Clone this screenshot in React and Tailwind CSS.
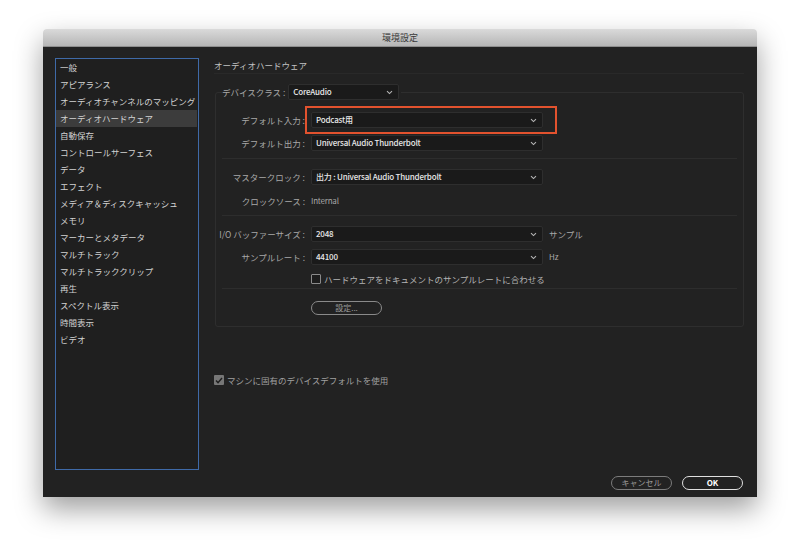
import { useState } from "react";

const sections = [
  "一般",
  "アピアランス",
  "オーディオチャンネルのマッピング",
  "オーディオハードウェア",
  "自動保存",
  "コントロールサーフェス",
  "データ",
  "エフェクト",
  "メディア＆ディスクキャッシュ",
  "メモリ",
  "マーカーとメタデータ",
  "マルチトラック",
  "マルチトラッククリップ",
  "再生",
  "スペクトル表示",
  "時間表示",
  "ビデオ",
];

const font = { fontFamily: '"Noto Sans CJK JP", "Noto Sans", sans-serif' };

function Chevron() {
  return (
    <svg width="7" height="5" viewBox="0 0 7 5" className="shrink-0">
      <path d="M1 1.2l2.5 2.4L6 1.2" fill="none" stroke="#b5b5b5" strokeWidth="1.1" />
    </svg>
  );
}

// Dark dropdown used through the panel
function Select({ value, className = "" }) {
  return (
    <div
      className={`flex h-[16px] items-center justify-between rounded-[2px] border border-[#2e2e2e] bg-[#1a1a1a] pl-[4px] pr-[5px] ${className}`}
    >
      <span className="whitespace-nowrap text-[8px] font-medium tracking-[-0.2px] text-[#e8e8e8]">{value}</span>
      <Chevron />
    </div>
  );
}

function Row({ label, children, className = "" }) {
  return (
    <div className={`flex h-[16px] items-center ${className}`}>
      <div className="w-[95px] shrink-0 whitespace-nowrap pr-[6px] text-right text-[8.5px] text-[#a8a8a8]">
        {label}
      </div>
      {children}
    </div>
  );
}

function Divider({ className = "" }) {
  return <div className={`mx-[6px] h-px bg-[#2d2d2d] ${className}`} />;
}

export default function App() {
  const [active, setActive] = useState(3);

  return (
    <div className="h-[556px] w-[800px] overflow-hidden bg-white pl-[43px] pt-[29px]" style={font}>
      <div className="flex h-[468px] w-[714px] flex-col rounded-t-[4px] shadow-[0_12px_28px_rgba(0,0,0,0.38)]">
        {/* title bar */}
        <div className="flex h-[18px] items-center justify-center rounded-t-[4px] border-b border-[#8e8e8e] bg-gradient-to-b from-[#dadada] to-[#b6b6b6]">
          <span className="text-[9px] text-[#3a3a3a]">環境設定</span>
        </div>

        <div className="flex flex-1 bg-[#222222] pl-[12px] pt-[11px]">
          {/* sections list */}
          <div className="h-[412px] w-[144px] border border-[#3f6aa8] bg-[#1f1f1f] pr-[1px]">
            {sections.map((s, i) => (
              <div
                key={s}
                onClick={() => setActive(i)}
                className={`flex h-[17px] cursor-default items-center whitespace-nowrap pl-[4px] text-[8.5px] text-[#d2d2d2] ${
                  active === i ? "bg-[#3c3c3c]" : ""
                }`}
              >
                {s}
              </div>
            ))}
          </div>

          {/* right panel */}
          <div className="ml-[15px] flex w-[530px] flex-col">
            <div className="flex h-[16px] items-center border-b border-[#292929] text-[8.5px] text-[#c2c2c2]">
              オーディオハードウェア
            </div>

            <div className="ml-[1px] mt-[18px] flex flex-col rounded-[3px] border border-[#2e2e2e]">
              {/* legend */}
              <div className="-mt-[9px] ml-[6px] flex w-fit items-center bg-[#222222] pr-[2px]">
                <span className="pr-[3px] text-[8.5px] text-[#a8a8a8]">デバイスクラス :</span>
                <Select value="CoreAudio" className="w-[111px]" />
              </div>

              <Row label="デフォルト入力 :" className="mt-[12px]">
                <div className="relative">
                  <Select value="Podcast用" className="w-[232px]" />
                  <div className="pointer-events-none absolute -bottom-[6px] -left-[6px] -right-[14px] -top-[6px] border-2 border-[#e2522e]" />
                </div>
              </Row>
              <Row label="デフォルト出力 :" className="mt-[7px]">
                <Select value="Universal Audio Thunderbolt" className="w-[232px]" />
              </Row>

              <Divider className="mt-[7px]" />

              <Row label="マスタークロック :" className="mt-[10px]">
                <Select value="出力 : Universal Audio Thunderbolt" className="w-[232px]" />
              </Row>
              <Row label="クロックソース :" className="mt-[8px]">
                <span className="text-[8px] tracking-[-0.2px] text-[#a8a8a8]">Internal</span>
              </Row>

              <Divider className="mt-[6px]" />

              <Row label="I/O バッファーサイズ :" className="mt-[10px]">
                <Select value="2048" className="w-[232px]" />
                <span className="ml-[6px] text-[8.5px] text-[#a8a8a8]">サンプル</span>
              </Row>
              <Row label="サンプルレート :" className="mt-[7px]">
                <Select value="44100" className="w-[232px]" />
                <span className="ml-[6px] text-[8px] text-[#a8a8a8]">Hz</span>
              </Row>
              <Row label="" className="mt-[6px]">
                <div className="flex items-center">
                  <div className="h-[10px] w-[10px] rounded-[1px] border border-[#8a8a8a] bg-[#1c1c1c]" />
                  <span className="ml-[3px] text-[8.5px] text-[#b4b4b4]">
                    ハードウェアをドキュメントのサンプルレートに合わせる
                  </span>
                </div>
              </Row>

              <Divider className="mt-px" />

              <div className="mb-[11px] mt-[12px] pl-[95px]">
                <button className="flex h-[14px] w-[71px] items-center justify-center rounded-full border border-[#8a8a8a] text-[8px] text-[#9c9c9c]">
                  設定...
                </button>
              </div>
            </div>

            <div className="mt-[47px] flex items-center">
              <div className="flex h-[10px] w-[10px] items-center justify-center rounded-[1px] bg-[#777777]">
                <svg width="8" height="7" viewBox="0 0 8 7">
                  <path d="M1 3.6l2 2L7 1" fill="none" stroke="#1e1e1e" strokeWidth="1.4" />
                </svg>
              </div>
              <span className="ml-[3px] text-[8.5px] text-[#a0a0a0]">
                マシンに固有のデバイスデフォルトを使用
              </span>
            </div>

            <div className="mt-auto mb-[7px] flex justify-end gap-[10px] pr-[1px]">
              <button className="flex h-[14px] w-[61px] items-center justify-center rounded-full border border-[#7c7c7c] text-[8px] text-[#9a9a9a]">
                キャンセル
              </button>
              <button className="flex h-[14px] w-[61px] items-center justify-center rounded-full border border-[#e0e0e0] text-[8px] font-bold text-white">
                OK
              </button>
            </div>
          </div>
        </div>
      </div>
    </div>
  );
}
